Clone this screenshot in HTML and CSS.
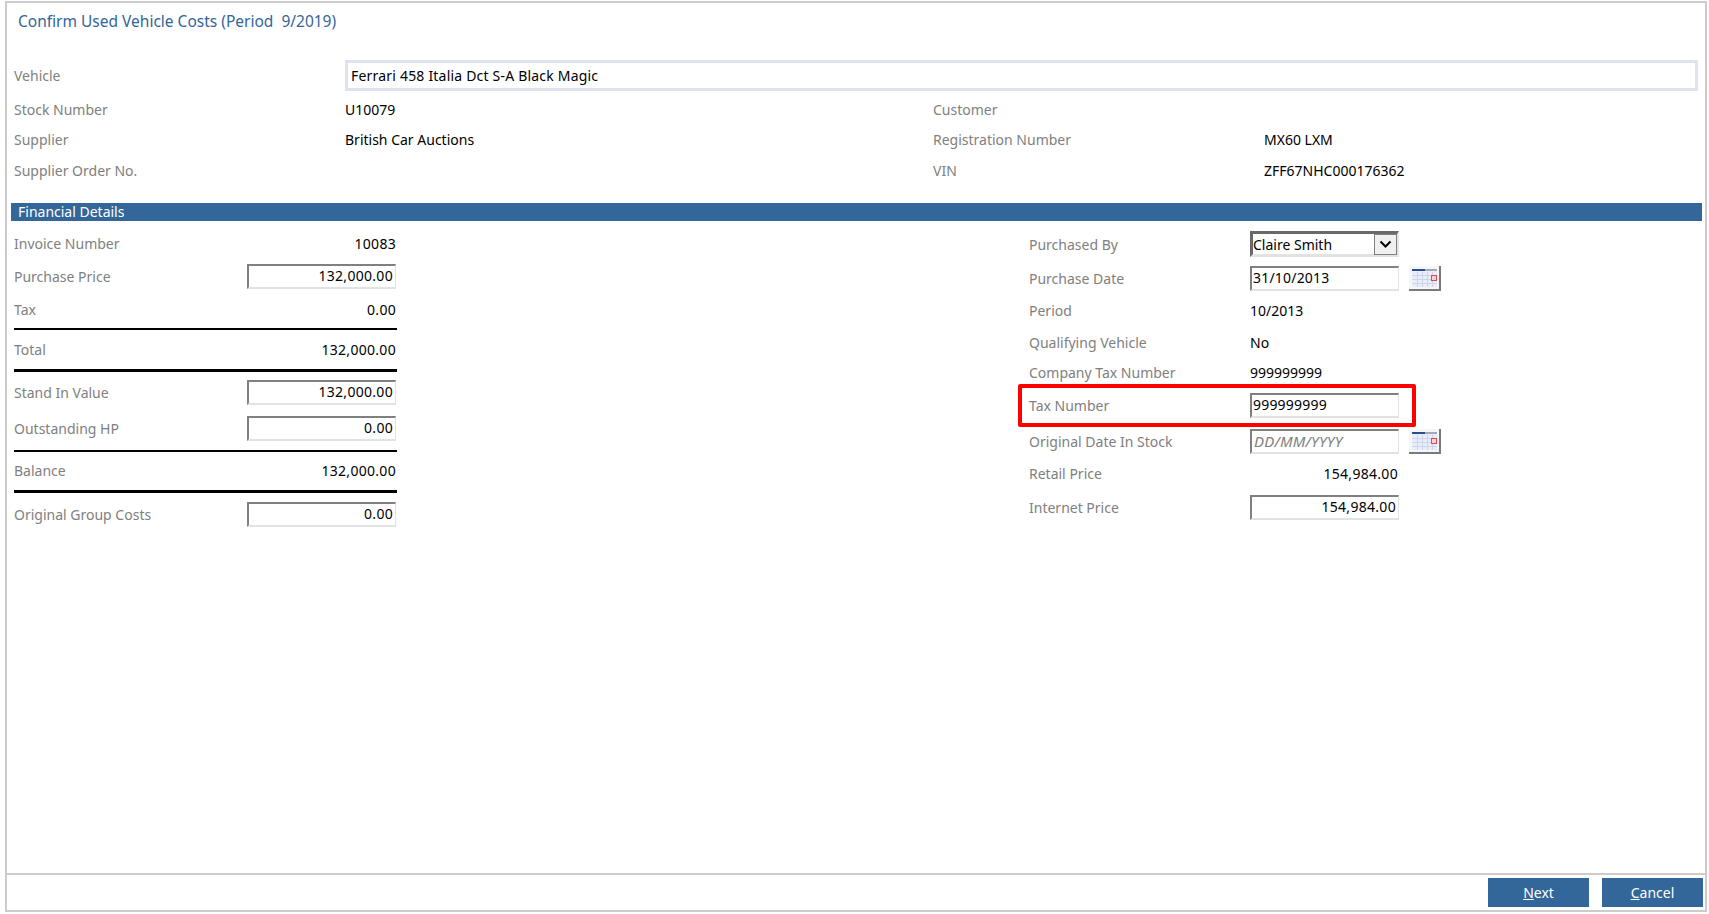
FILE: index.html
```html
<!DOCTYPE html>
<html lang="en">
<head>
  <meta charset="UTF-8" />
  <title>Confirm Used Vehicle Costs</title>
  <link rel="stylesheet" href="styles.css">
</head>
<body>
  <div class="frame">
    <div class="main">
      <h1 class="title">Confirm Used Vehicle Costs (Period&nbsp; 9/2019)</h1>

      <div class="vehicle-row">
        <div class="label">Vehicle</div>
        <div class="vehicle-input">Ferrari 458 Italia Dct S-A Black Magic</div>
      </div>

      <div class="details">
        <div class="label">Stock Number</div>
        <div class="value">U10079</div>
        <div class="label">Customer</div>
        <div class="value"></div>
        <div class="label">Supplier</div>
        <div class="value">British Car Auctions</div>
        <div class="label">Registration Number</div>
        <div class="value">MX60 LXM</div>
        <div class="label">Supplier Order No.</div>
        <div class="value"></div>
        <div class="label">VIN</div>
        <div class="value">ZFF67NHC000176362</div>
      </div>

      <div class="section-bar">Financial Details</div>

      <div class="financial">
        <div class="costs">
          <div class="row"><div class="label">Invoice Number</div><div class="amount">10083</div></div>
          <div class="row"><div class="label">Purchase Price</div><div class="field num">132,000.00</div></div>
          <div class="row"><div class="label">Tax</div><div class="amount">0.00</div></div>
          <div class="rule"></div>
          <div class="row"><div class="label">Total</div><div class="amount">132,000.00</div></div>
          <div class="rule heavy"></div>
          <div class="row"><div class="label">Stand In Value</div><div class="field num">132,000.00</div></div>
          <div class="row"><div class="label">Outstanding HP</div><div class="field num">0.00</div></div>
          <div class="rule"></div>
          <div class="row"><div class="label">Balance</div><div class="amount">132,000.00</div></div>
          <div class="rule heavy"></div>
          <div class="row"><div class="label">Original Group Costs</div><div class="field num">0.00</div></div>
        </div>

        <div class="purchase">
          <div class="row">
            <div class="label">Purchased By</div>
            <div class="select">
              <span>Claire Smith</span>
              <span class="select-btn">
                <svg width="13" height="9" viewBox="0 0 13 9"><path d="M1.5 1.5 L6.5 6.5 L11.5 1.5" fill="none" stroke="#000" stroke-width="2"/></svg>
              </span>
            </div>
          </div>
          <div class="row">
            <div class="label">Purchase Date</div>
            <div class="field">31/10/2013</div>
            <svg class="cal" width="32" height="25" viewBox="0 0 32 25"><use href="#calendar"/></svg>
          </div>
          <div class="row"><div class="label">Period</div><div class="value">10/2013</div></div>
          <div class="row"><div class="label">Qualifying Vehicle</div><div class="value">No</div></div>
          <div class="row"><div class="label">Company Tax Number</div><div class="value">999999999</div></div>
          <div class="row highlighted">
            <div class="label">Tax Number</div>
            <div class="field">999999999</div>
          </div>
          <div class="row">
            <div class="label">Original Date In Stock</div>
            <div class="field hint">DD/MM/YYYY</div>
            <svg class="cal" width="32" height="25" viewBox="0 0 32 25"><use href="#calendar"/></svg>
          </div>
          <div class="row"><div class="label">Retail Price</div><div class="value price">154,984.00</div></div>
          <div class="row"><div class="label">Internet Price</div><div class="field num">154,984.00</div></div>
        </div>
      </div>
    </div>

    <div class="footer">
      <button class="btn"><u>N</u>ext</button>
      <button class="btn"><u>C</u>ancel</button>
    </div>
  </div>

  <svg class="defs" width="0" height="0">
    <symbol id="calendar" viewBox="0 0 32 25">
      <rect x="0" y="0" width="32" height="25" fill="#f6f6f6"/>
      <path d="M0 24 H31 V0" fill="none" stroke="#7a7a7a" stroke-width="2"/>
      <rect x="3" y="3" width="25" height="18" fill="#e9edf9"/>
      <path d="M3 9.5 H28 M3 13.5 H28 M3 17.5 H28 M8.5 6 V21 M13.5 6 V21 M18.5 6 V21 M23.5 6 V21" stroke="#ccd5ea" fill="none"/>
      <rect x="3" y="3" width="13" height="2" fill="#2b4c8c"/>
      <rect x="16" y="3" width="12" height="2" fill="#a4a8b4"/>
      <rect x="22.5" y="9.5" width="5" height="5" fill="#fbd0d0" stroke="#e0464a"/>
    </symbol>
  </svg>
</body>
</html>
```

FILE: styles.css
```css
* {
  box-sizing: border-box;
}

body {
  margin: 0;
  padding: 1px 2px 2px 5px;
  background: #fff;
  font-family: "Noto Sans", sans-serif;
  font-size: 14px;
  color: #000;
}

.frame {
  display: flex;
  flex-direction: column;
  height: 911px;
  border: 2px solid #ccc;
}

.main {
  flex: 1;
  padding: 0 0 0 4px;
}

.title {
  height: 36px;
  margin: 0;
  padding-left: 7px;
  font-size: 15.5px;
  font-weight: normal;
  line-height: 36px;
  color: #336699;
}

.label {
  color: #808080;
}

.vehicle-row {
  display: grid;
  grid-template-columns: 331px 1353px;
  align-items: center;
  margin-top: 21px;
  padding-left: 3px;
}

.vehicle-input {
  height: 31px;
  padding-left: 3px;
  border: 3px solid #dde4ee;
  letter-spacing: 0.2px;
  line-height: 25px;
}

.details {
  display: grid;
  grid-template-columns: 331px 588px 331px 1fr;
  grid-auto-rows: 30.5px;
  align-items: center;
  margin-top: 3px;
  padding-left: 3px;
}

.section-bar {
  height: 18px;
  margin: 17.5px 3px 0 0;
  padding-left: 7px;
  background: #336699;
  color: #fff;
  line-height: 18px;
}

.financial {
  display: grid;
  grid-template-columns: 383px 412px;
  column-gap: 632px;
  padding: 7px 0 0 3px;
}

.costs {
  display: grid;
  grid-template-rows: 30px 36px 30px 10px 30px 12px 33px 39px 6px 33px 9px 37px;
}

.purchase {
  display: grid;
  grid-template-rows: 32px 36px 29px 34px 27px 39px 33px 31px 37px;
}

.row {
  display: flex;
  align-items: center;
}

.costs .label {
  width: 233px;
}

.purchase .label {
  width: 221px;
}

.amount {
  flex: 1;
  padding-right: 1px;
  letter-spacing: 0.3px;
  text-align: right;
}

.value.price {
  width: 149px;
  padding-right: 1px;
  letter-spacing: 0.3px;
  text-align: right;
}

.field {
  width: 149px;
  height: 25px;
  padding-left: 1px;
  border-style: solid;
  border-width: 2px 1px 2px 2px;
  border-color: #808080 #e2e2e2 #e2e2e2 #808080;
  letter-spacing: 0.2px;
  line-height: 20px;
}

.field.num {
  padding-right: 2px;
  letter-spacing: 0.3px;
  text-align: right;
}

.field.hint {
  padding-left: 2px;
  color: #808080;
  font-size: 15px;
  font-style: italic;
}

.select {
  display: flex;
  align-items: center;
  justify-content: space-between;
  width: 149px;
  height: 26px;
  border-style: solid;
  border-width: 3px 2px 3px 3px;
  border-color: #696969 #e2e2e2 #e2e2e2 #696969;
}

.select-btn {
  display: flex;
  align-items: center;
  justify-content: center;
  width: 23px;
  height: 21px;
  border: 1px solid #808080;
  background: #f0f0f0;
}

.cal {
  margin-left: 10px;
}

.defs {
  position: absolute;
}

.rule {
  align-self: center;
  height: 2px;
  background: #000;
}

.rule.heavy {
  height: 3px;
}

.highlighted {
  position: relative;
}

/* red annotation box drawn over the row */
.highlighted::after {
  content: "";
  position: absolute;
  top: -2px;
  right: 25px;
  bottom: -2px;
  left: -11px;
  border: 4px solid #f00;
  border-radius: 2px;
}

.footer {
  display: flex;
  justify-content: flex-end;
  gap: 13px;
  height: 37px;
  padding: 3px 2px 0 0;
  border-top: 2px solid #ccc;
}

.btn {
  width: 101px;
  height: 29px;
  padding: 0;
  border: none;
  background: #336699;
  color: #fff;
  font-family: inherit;
  font-size: 14px;
}
```
